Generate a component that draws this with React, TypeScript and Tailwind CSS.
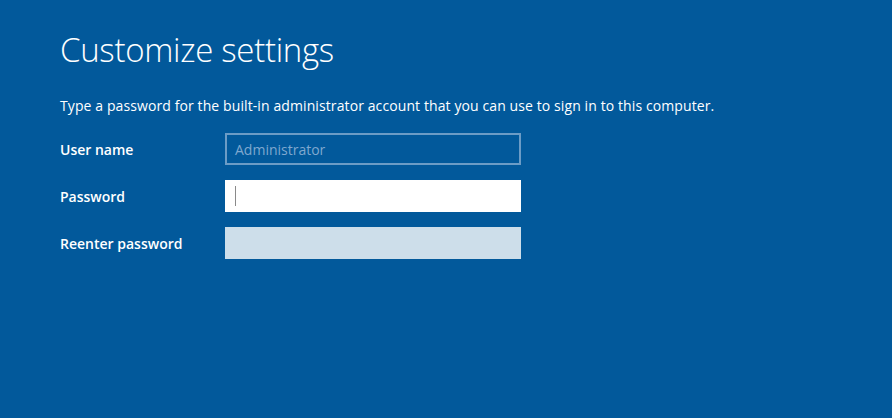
export default function App() {
  return (
    <div
      className="h-[418px] w-[892px] overflow-hidden bg-[#02599b] text-white"
      style={{ fontFamily: '"Open Sans", "Noto Sans", sans-serif' }}
    >
      <div className="pl-[60px] pt-[27px]">
        <h1 className="text-[33px] font-light leading-[46px] tracking-[-0.3px]">Customize settings</h1>
        <p className="mt-[23px] text-[14px] leading-[20px] tracking-[0.1px]">
          Type a password for the built-in administrator account that you can use to sign in to this computer.
        </p>

        <div className="mt-[17px] flex flex-col gap-[15px]">
          <div className="flex items-center">
            <label className="w-[165px] text-[14px] font-semibold">User name</label>
            <div className="flex h-[32px] w-[296px] items-center border-2 border-[#6c9cc6] px-[8px] text-[14px] text-[#7fa8cf]">
              Administrator
            </div>
          </div>
          <div className="flex items-center">
            <label className="w-[165px] text-[14px] font-semibold">Password</label>
            <div className="flex h-[32px] w-[296px] items-center bg-white px-[10px]">
              <span className="h-[20px] w-px bg-[#8a8a8a]" />
            </div>
          </div>
          <div className="flex items-center">
            <label className="w-[165px] text-[14px] font-semibold">Reenter password</label>
            <div className="h-[32px] w-[296px] bg-[#cddeea]" />
          </div>
        </div>
      </div>
    </div>
  );
}
